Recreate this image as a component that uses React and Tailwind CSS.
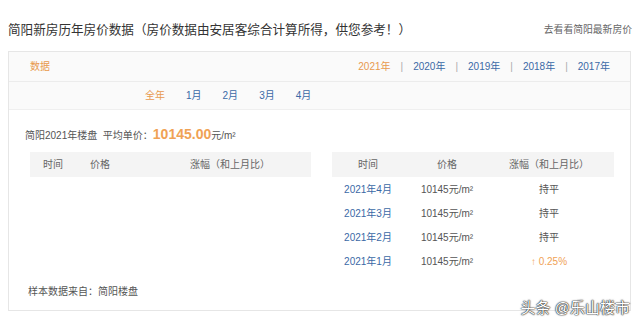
const years = ['2021年', '2020年', '2019年', '2018年', '2017年'];
const months = ['全年', '1月', '2月', '3月', '4月'];
const rows = [
  { date: '2021年4月', price: '10145元/m²', change: '持平', up: false },
  { date: '2021年3月', price: '10145元/m²', change: '持平', up: false },
  { date: '2021年2月', price: '10145元/m²', change: '持平', up: false },
  { date: '2021年1月', price: '10145元/m²', change: '↑ 0.25%', up: true },
];

export default function App() {
  return (
    <div className="relative w-[640px] h-[325px] overflow-hidden bg-white font-['Liberation_Sans','Noto_Sans_CJK_SC',sans-serif] text-[#555]">
      {/* Title */}
      <div className="flex items-center justify-between pl-2 pr-2 pt-[22px] h-[38px]">
        <span className="text-[12.6px] leading-4 text-[#333]">简阳新房历年房价数据（房价数据由安居客综合计算所得，供您参考！）</span>
        <span className="text-[9.8px] leading-4 text-[#666]">去看看简阳最新房价</span>
      </div>

      <div className="ml-2 mr-[9px] mt-[13px] border border-[#e6e6e6]">
        {/* Header row */}
        <div className="flex items-center justify-between h-[30px] bg-[#fafafa] border-b border-[#ececec] pl-[21px] pr-[20px]">
          <span className="text-[10px] text-[#e8994e]">数据</span>
          <div className="flex items-center text-[10px]">
            {years.map((y, i) => (
              <div key={y} className="flex items-center">
                {i > 0 && <span className="text-[#aaa] px-[10px]">|</span>}
                <span className={i === 0 ? 'text-[#e8994e]' : 'text-[#3b69a6]'}>{y}</span>
              </div>
            ))}
          </div>
        </div>

        {/* Month tabs */}
        <div className="flex items-center h-[28px] bg-[#fafafa] border-b border-[#efefef] pl-[136px] gap-[21px] text-[10px]">
          {months.map((m, i) => (
            <span key={m} className={i === 0 ? 'text-[#e8994e]' : 'text-[#3b69a6]'}>{m}</span>
          ))}
        </div>

        {/* Content */}
        <div className="pl-[16px] pt-[14px] pb-[11px]">
          <div className="flex items-baseline h-4 text-[10px] text-[#555]">
            <span>简阳2021年楼盘&nbsp;&nbsp;平均单价：</span>
            <span className="text-[14px] font-bold text-[#f0a255]">10145.00</span>
            <span>元/m²</span>
          </div>

          <div className="flex items-start gap-[21px] mt-[12px] pl-[5px]">
            {/* Left table */}
            <div className="w-[281px]">
              <div className="flex items-center h-[25px] bg-[#f4f4f4] text-[10px] text-[#666]">
                <span className="w-[60px] shrink-0 pl-[13px]">时间</span>
                <span className="w-[100px] shrink-0">价格</span>
                <span>涨幅（和上月比）</span>
              </div>
            </div>

            {/* Right table */}
            <div className="w-[282px]">
              <div className="grid grid-cols-[72px_86px_118px] items-center h-[25px] bg-[#f4f4f4] text-[10px] text-[#666] text-center">
                <span>时间</span>
                <span>价格</span>
                <span>涨幅（和上月比）</span>
              </div>
              {rows.map((r) => (
                <div key={r.date} className="grid grid-cols-[72px_86px_118px] items-center h-[24px] text-[10px] text-center">
                  <span className="text-[#3b69a6]">{r.date}</span>
                  <span className="text-[#555]">{r.price}</span>
                  <span className={r.up ? 'text-[#f0a255]' : 'text-[#555]'}>{r.change}</span>
                </div>
              ))}
            </div>
          </div>

          <div className="mt-[10px] pl-[3px] h-4 flex items-center text-[10px] text-[#555]">
            样本数据来自：简阳楼盘
          </div>
        </div>
      </div>

      {/* Watermark */}
      <div className="absolute right-[10px] top-[299px] text-[15px] leading-[18px] text-white [text-shadow:0_0_1px_#222,0_0_1px_#222,0_0_2px_#444]">
        头条 @乐山楼市
      </div>
    </div>
  );
}
